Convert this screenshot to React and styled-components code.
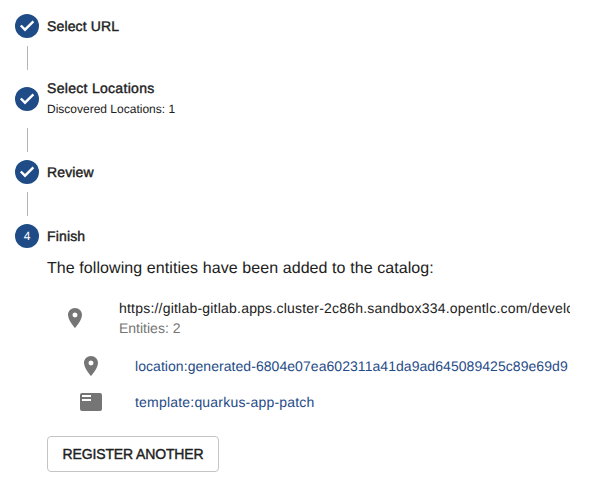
import React from 'react';
import styled, { createGlobalStyle } from 'styled-components';

const Global = createGlobalStyle`
  * { box-sizing: border-box; }
  body {
    margin: 0;
    background: #fff;
    color: #212121;
    font-family: "Liberation Sans", Arial, sans-serif;
    text-rendering: geometricPrecision;
    overflow: hidden;
  }
`;
const Stepper = styled.main`
  width: 609px;
  height: 486px;
  padding: 14px 15px;
`;
const Step = styled.div`
  display: flex;
  align-items: center;
  gap: 8px;
  height: ${(p) => p.$height || 24}px;
`;
const Badge = styled.svg`
  width: 24px;
  height: 24px;
  flex: none;
  display: block;
`;
const Circle = styled.span`
  display: grid;
  place-items: center;
  width: 24px;
  height: 24px;
  flex: none;
  border-radius: 50%;
  background: #1f4b87;
  color: #fff;
  font-size: 12px;
`;
const Label = styled.div`
  font-size: 14px;
  line-height: 20px;
  letter-spacing: ${(p) => p.$spacing || 0}px;
  -webkit-text-stroke: 0.4px currentColor;
`;
const Caption = styled.div`
  padding: 1px 0;
  font-size: 12px;
  line-height: 20px;
`;
const Connector = styled.div`
  width: 1px;
  height: 24px;
  margin: 8px 0 8px 12px;
  background: #b5b5b5;
`;
const Content = styled.section`
  margin-left: 32px;
  padding-top: 9px;
`;
const Message = styled.p`
  margin: 0;
  font-size: 16px;
  line-height: 24px;
  letter-spacing: 0.08px;
`;
const List = styled.div`
  width: 523px;
  margin-top: 17px;
  overflow: hidden;
`;
const Item = styled.div`
  display: flex;
  align-items: center;
  height: ${(p) => p.$height}px;
  margin-bottom: ${(p) => p.$gap || 0}px;
  padding-left: ${(p) => p.$indent}px;
`;
const IconBox = styled.div`
  width: 56px;
  flex: none;
`;
const Icon = styled.svg`
  display: block;
  width: 24px;
  height: 24px;
  fill: #757575;
`;
const Line = styled.div`
  font-size: 14px;
  line-height: 20px;
  white-space: nowrap;
  color: ${(p) => p.$color || 'inherit'};
  letter-spacing: ${(p) => p.$spacing || 0}px;
`;
const Button = styled.button`
  width: 172px;
  height: 36px;
  margin-top: 16px;
  padding: 0;
  border: 1px solid #c4c4c4;
  border-radius: 4px;
  background: #fff;
  color: #212121;
  font: 14px "Liberation Sans", Arial, sans-serif;
  letter-spacing: -0.14px;
  -webkit-text-stroke: 0.4px currentColor;
`;

const Check = () => (
  <Badge viewBox="0 0 24 24">
    <circle cx="12" cy="12" r="12" fill="#1f4b87" />
    <path fill="none" stroke="#fff" strokeWidth="2.4" d="M5.8 11.5l4.2 4.2 8.4-8.4" />
  </Badge>
);
const Pin = () => (
  <IconBox>
    <Icon viewBox="0 0 24 24">
      <path d="M12 2C8.13 2 5 5.13 5 9c0 5.25 7 13 7 13s7-7.75 7-13c0-3.87-3.13-7-7-7zm0 9.5a2.5 2.5 0 0 1 0-5 2.5 2.5 0 0 1 0 5z" />
    </Icon>
  </IconBox>
);

export default function App() {
  return (
    <>
      <Global />
      <Stepper>
        <Step><Check /><Label $spacing={0.14}>Select URL</Label></Step>
        <Connector />
        <Step $height={42}>
          <Check />
          <div><Label $spacing={0.3}>Select Locations</Label><Caption>Discovered Locations: 1</Caption></div>
        </Step>
        <Connector />
        <Step><Check /><Label $spacing={0.15}>Review</Label></Step>
        <Connector />
        <Step><Circle>4</Circle><Label $spacing={0.15}>Finish</Label></Step>
        <Content>
          <Message>The following entities have been added to the catalog:</Message>
          <List>
            <Item $height={40} $indent={16} $gap={10}>
              <Pin />
              <div>
                <Line $spacing={0.21}>https://gitlab-gitlab.apps.cluster-2c86h.sandbox334.opentlc.com/developer</Line>
                <Line $color="#757575">Entities: 2</Line>
              </div>
            </Item>
            <Item $height={36} $indent={32}>
              <Pin />
              <Line $color="#1f4b87" $spacing={0.055}>location:generated-6804e07ea602311a41da9ad645089425c89e69d9</Line>
            </Item>
            <Item $height={36} $indent={32}>
              <IconBox>
                <Icon viewBox="0 0 24 24">
                  <path fillRule="evenodd" d="M3 3h18a2 2 0 0 1 2 2v14a2 2 0 0 1-2 2H3a2 2 0 0 1-2-2V5a2 2 0 0 1 2-2zm0 2v2h9V5zm0 4v2h9V9z" />
                </Icon>
              </IconBox>
              <Line $color="#1f4b87" $spacing={0.2}>template:quarkus-app-patch</Line>
            </Item>
          </List>
          <Button>REGISTER ANOTHER</Button>
        </Content>
      </Stepper>
    </>
  );
}
